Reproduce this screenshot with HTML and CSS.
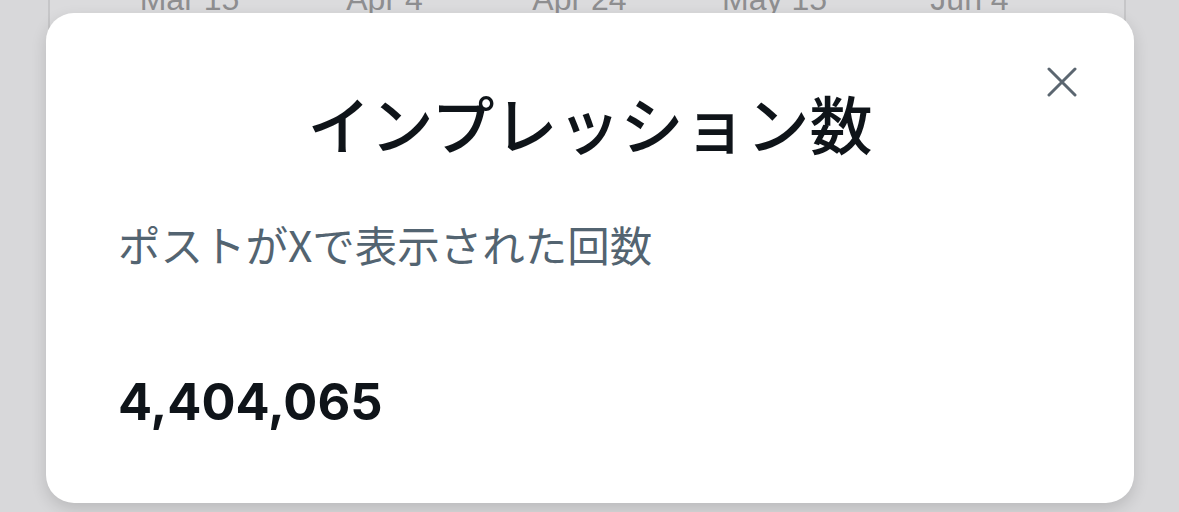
FILE: index.html
```html
<!DOCTYPE html>
<html lang="ja">
<head>
  <meta charset="UTF-8" />
  <meta name="viewport" content="width=device-width, initial-scale=1.0"/>
  <title>インプレッション数</title>
  <link rel="stylesheet" href="styles.css">
</head>
<body>

  <div class="scene">
    <div class="chart-card">
      <div class="axis">
        <span>Mar 15</span>
        <span>Apr 4</span>
        <span>Apr 24</span>
        <span>May 15</span>
        <span>Jun 4</span>
      </div>
    </div>
    <div class="cards">
      <div class="card"></div>
      <div class="card"></div>
    </div>
  </div>

  <div class="modal">
    <button class="close-btn" aria-label="閉じる">
      <svg viewBox="0 0 30 30" width="30" height="30">
        <path d="M2 2 L28 28 M28 2 L2 28" />
      </svg>
    </button>
    <h1>インプレッション数</h1>
    <p class="desc">ポストがXで表示された回数</p>
    <div class="value">4,404,065</div>
  </div>

</body>
</html>
```

FILE: styles.css
```css
* {
  margin: 0;
  padding: 0;
  box-sizing: border-box;
}

html, body {
  overflow: hidden;
}

body {
  background: #d8d8da;
  width: 1179px;
  height: 512px;
  position: relative;
  font-family: 'Noto Sans CJK JP', 'Noto Sans', sans-serif;
}

/* dimmed page behind the dialog */
.scene {
  padding: 0 53px 0 48px;
}

.chart-card {
  margin-top: -60px;
  height: 110px;
  background: #dbdbdd;
  border: 2px solid #c6c6c8;
  border-radius: 22px;
  padding: 41px 0 0 42px;
}

.axis {
  display: flex;
}

.axis span {
  width: 195px;
  text-align: center;
  font-family: 'Liberation Sans', Arial, sans-serif;
  font-size: 32px;
  line-height: 32px;
  color: #8e8e90;
}

.cards {
  display: grid;
  grid-template-columns: 1fr 1fr;
  gap: 48px;
  margin-top: 20px;
}

.card {
  height: 380px;
  background: #cfcfd1;
  border: 2px solid #bcbcbe;
  border-radius: 22px;
}

/* dialog */
.modal {
  position: absolute;
  top: 13px;
  left: 46px;
  width: 1088px;
  height: 490px;
  background: #fff;
  border-radius: 28px;
  box-shadow: 0 6px 16px rgba(0, 0, 0, 0.14);
  padding: 77px 72px 0;
  display: flex;
  flex-direction: column;
}

.close-btn {
  position: absolute;
  top: 54px;
  right: 57px;
  width: 30px;
  height: 30px;
  background: none;
  border: none;
  cursor: pointer;
}

.close-btn svg {
  display: block;
  stroke: #5b6670;
  stroke-width: 3;
  stroke-linecap: round;
  fill: none;
}

h1 {
  text-align: center;
  font-size: 63px;
  line-height: 1;
  font-weight: 500;
  color: #0f1419;
}

.desc {
  margin-top: 70px;
  font-size: 42.5px;
  line-height: 1;
  color: #536471;
}

.value {
  margin-top: 111px;
  font-family: Inter, 'Liberation Sans', sans-serif;
  font-size: 50.5px;
  line-height: 1;
  font-weight: 700;
  color: #0f1419;
}
```
